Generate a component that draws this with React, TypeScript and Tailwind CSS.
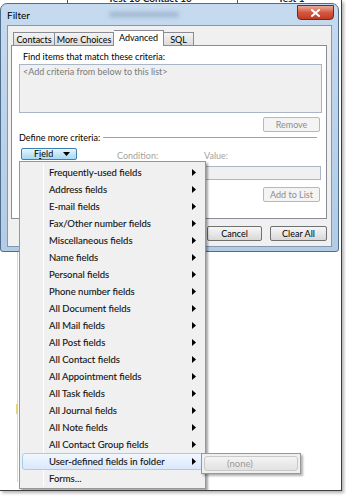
import React from "react";

const menuItems = [
  "Frequently-used fields",
  "Address fields",
  "E-mail fields",
  "Fax/Other number fields",
  "Miscellaneous fields",
  "Name fields",
  "Personal fields",
  "Phone number fields",
  "All Document fields",
  "All Mail fields",
  "All Post fields",
  "All Contact fields",
  "All Appointment fields",
  "All Task fields",
  "All Journal fields",
  "All Note fields",
  "All Contact Group fields",
  "User-defined fields in folder",
  "Forms...",
];

const HIGHLIGHT = "User-defined fields in folder";

function Arrow() {
  return (
    <svg width="4" height="7" viewBox="0 0 4 7" className="shrink-0">
      <path d="M0 0 L4 3.5 L0 7 Z" fill="#000" />
    </svg>
  );
}

function Btn({ label, disabled, w }: { label: string; disabled?: boolean; w: string }) {
  return (
    <div
      className={`${w} h-[15px] rounded-[2px] border flex items-center justify-center text-[9px] leading-none ${
        disabled
          ? "border-[#b5b9bd] bg-[#f4f4f4] text-[#8d8d8d]"
          : "border-[#707070] bg-gradient-to-b from-[#f6f6f6] via-[#e8e8e8] to-[#d8d8d8] text-black"
      }`}
    >
      {label}
    </div>
  );
}

export default function App() {
  return (
    <div className="w-[346px] h-[496px] bg-white relative overflow-hidden font-['Lato','Open_Sans',sans-serif]">
      <div className="relative w-[342px] h-[491px] bg-white border-r-[1.5px] border-b-[1.5px] border-[#3d3d3d] shadow-[2px_2px_3px_rgba(0,0,0,0.3)] overflow-hidden">
        {/* Background app, peeking above the dialog */}
        <div className="relative h-[3px] overflow-hidden text-[10px] font-bold text-[#222]">
          <span className="absolute left-[108px] -top-[9px]">Test 10 Contact 10</span>
          <span className="absolute left-[278px] -top-[9px]">Test 1 Contact 1</span>
          <div className="absolute left-[67px] top-0 w-px h-full bg-[#555]" />
          <div className="absolute left-[237px] top-0 w-px h-full bg-[#555]" />
        </div>

        {/* Dialog */}
        <div className="relative w-[339px] h-[249px] rounded-t-[7px] rounded-b-[3px] border border-[#4f6d8d] bg-gradient-to-b from-[#c6daef] via-[#bcd2ea] to-[#b3cbe5] flex flex-col">
          {/* title bar */}
          <div className="relative h-[21px] flex items-start justify-between">
            <span className="pl-[6px] pt-[4px] text-[10px] text-black">Filter</span>
            <div className="absolute left-[108px] top-[8px] w-[70px] h-[5px] rounded-full bg-[#9fb6d0] blur-[2px]" />
            <div className="mr-[4px] mt-[1px] w-[37px] h-[15px] rounded-b-[4px] border border-[#6b2a22] bg-gradient-to-b from-[#e9a99a] via-[#d4583f] to-[#c23a24] flex items-center justify-center">
              <svg width="9" height="8" viewBox="0 0 9 8">
                <path d="M1 1 L8 7 M8 1 L1 7" stroke="#fff" strokeWidth="2" strokeLinecap="square" />
              </svg>
            </div>
          </div>

          {/* client area */}
          <div className="mx-[6px] h-[222px] border border-[#8198b2] bg-[#f0f0f0] flex flex-col">
            {/* tabs */}
            <div className="mt-[4px] ml-[3px] h-[15px] flex items-end text-[9px] leading-none text-black">
              <div className="ml-[2px] w-[42px] h-[13px] border border-b-0 border-[#898c95] bg-gradient-to-b from-[#f3f3f3] to-[#dcdcdc] flex items-center justify-center">
                Contacts
              </div>
              <div className="w-[59px] h-[13px] border border-l-0 border-b-0 border-[#898c95] bg-gradient-to-b from-[#f3f3f3] to-[#dcdcdc] flex items-center justify-center">
                More Choices
              </div>
              <div className="relative z-10 -mb-px w-[50px] h-[16px] border border-l-0 border-b-0 border-[#898c95] bg-white flex items-start pt-[2px] justify-center">
                Advanced
              </div>
              <div className="w-[30px] h-[13px] border border-l-0 border-b-0 border-[#898c95] bg-gradient-to-b from-[#f3f3f3] to-[#dcdcdc] flex items-center justify-center">
                SQL
              </div>
            </div>

            {/* tab panel */}
            <div className="ml-[3px] w-[316px] h-[174px] border border-[#898c95] bg-white flex flex-col text-[9px] leading-[10px] text-black">
              <div className="pt-[6px] pl-[11px]">Find items that match these criteria:</div>
              <div className="mt-[2px] ml-[7px] w-[303px] h-[49px] border border-[#a8b6c8] bg-[#f0f0f0] pl-[3px] pt-[2px] text-[#7a7a7a]">
                &lt;Add criteria from below to this list&gt;
              </div>
              <div className="mt-[4px] mr-[6px] flex justify-end">
                <Btn label="Remove" disabled w="w-[57px]" />
              </div>
              <div className="mt-px ml-[7px] mr-[9px] h-[10px] flex items-center gap-[3px]">
                <span>Define more criteria:</span>
                <div className="flex-1 h-[2px] border-t border-[#a0a0a0] border-b-white" />
              </div>
              <div className="mt-[5px] h-[12px] flex items-start">
                <div className="ml-[9px] w-[56px] h-[12px] rounded-[2px] border border-[#3c7fb1] bg-gradient-to-b from-[#eaf6fd] via-[#c4e5f7] to-[#a7d9f5] flex items-center justify-between pl-[12px] pr-[6px] text-black">
                  <span>
                    F<span className="underline">i</span>eld
                  </span>
                  <svg width="7" height="4" viewBox="0 0 7 4">
                    <path d="M0 0 H7 L3.5 4 Z" fill="#000" />
                  </svg>
                </div>
                <span className="ml-[40px] w-[87px] pt-[3px] text-[#a3a3a3]">Condition:</span>
                <span className="pt-[3px] text-[#a3a3a3]">Value:</span>
              </div>
              <div className="mt-[6px] ml-[192px] w-[117px] h-[14px] border border-[#a8b6c8] bg-[#f0f0f0]" />
              <div className="mt-[7px] mr-[6px] flex justify-end">
                <Btn label="Add to List" disabled w="w-[57px]" />
              </div>
            </div>

            {/* dialog buttons */}
            <div className="mt-[7px] ml-[3px] w-[316px] flex justify-end gap-[8px]">
              <Btn label="OK" w="w-[55px]" />
              <Btn label="Cancel" w="w-[55px]" />
              <Btn label="Clear All" w="w-[57px]" />
            </div>
          </div>
        </div>

        {/* faint background below dialog */}
        <div className="absolute left-[17px] top-[252px] w-px h-[230px] bg-[#d8d8d8]" />
        <div className="absolute left-[16px] top-[404px] w-[2px] h-[10px] bg-[#e8d27a]" />

        {/* Field dropdown menu */}
        <div className="absolute left-[19px] top-[161px] w-[187px] h-[328px] border border-[#979797] bg-[#f0f0f0] shadow-[2px_2px_2px_rgba(0,0,0,0.35)] p-[2px] text-[9.5px] leading-none text-[#111]">
          <div className="absolute left-[23px] top-[2px] bottom-[2px] w-px bg-[#e2e3e3] border-r border-white" />
          {menuItems.map((item) => (
            <div
              key={item}
              className={`relative h-[17px] flex items-center justify-between pl-[26px] pr-[6px] rounded-[3px] border ${
                item === HIGHLIGHT
                  ? "border-[#a8cbf0] bg-gradient-to-b from-[#f1f7fe] to-[#d9e8fb]"
                  : "border-transparent"
              }`}
            >
              <span className="[-webkit-text-stroke:0.1px_#111]">{item}</span>
              {item !== "Forms..." && <Arrow />}
            </div>
          ))}
        </div>

        {/* Submenu */}
        <div className="absolute left-[201px] top-[453px] w-[100px] h-[21px] border border-[#979797] bg-[#f0f0f0] shadow-[2px_2px_2px_rgba(0,0,0,0.3)] p-[2px]">
          <div className="h-[15px] rounded-[3px] border border-[#c9c9c9] bg-gradient-to-b from-[#f4f4f4] to-[#e2e2e2] flex items-center pl-[22px] text-[9.5px] leading-none text-[#9a9a9a]">
            (none)
          </div>
        </div>
      </div>
    </div>
  );
}
